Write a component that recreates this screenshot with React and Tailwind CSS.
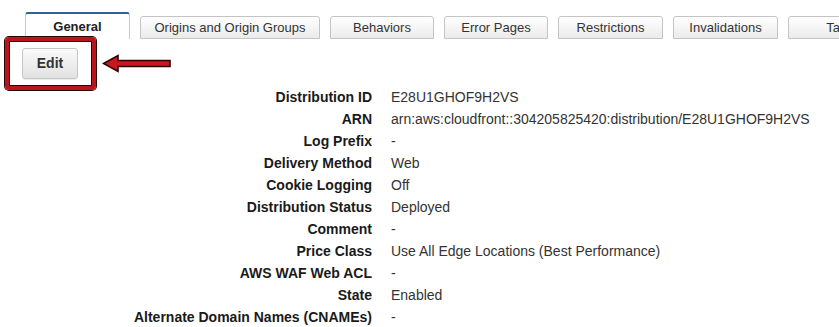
import React from "react";

const tabs = [
  { label: "Origins and Origin Groups", w: "w-[180px]" },
  { label: "Behaviors", w: "w-[104px]" },
  { label: "Error Pages", w: "w-[104px]" },
  { label: "Restrictions", w: "w-[105px]" },
  { label: "Invalidations", w: "w-[105px]" },
  { label: "Tags", w: "w-[104px]" },
];

const rows = [
  ["Distribution ID", "E28U1GHOF9H2VS"],
  ["ARN", "arn:aws:cloudfront::304205825420:distribution/E28U1GHOF9H2VS"],
  ["Log Prefix", "-"],
  ["Delivery Method", "Web"],
  ["Cookie Logging", "Off"],
  ["Distribution Status", "Deployed"],
  ["Comment", "-"],
  ["Price Class", "Use All Edge Locations (Best Performance)"],
  ["AWS WAF Web ACL", "-"],
  ["State", "Enabled"],
  ["Alternate Domain Names (CNAMEs)", "-"],
];

export default function App() {
  return (
    <div
      className="relative w-[839px] h-[327px] overflow-hidden bg-white text-[#333]"
      style={{ fontFamily: '"Liberation Sans", Arial, sans-serif' }}
    >
      {/* Tabs */}
      <div className="flex items-end gap-[10px] pl-[25px] pt-[12px] whitespace-nowrap">
        <div className="w-[105px] h-[27px] shrink-0 border-t-[2px] border-x border-t-[#2f6296] border-x-[#c8c8c8] rounded-t-[3px] bg-white flex items-center justify-center pt-[1px] text-[13px] font-bold text-[#222]">
          General
        </div>
        {tabs.map((t) => (
          <div
            key={t.label}
            className={`${t.w} h-[23px] shrink-0 border border-[#c4c4c4] rounded-t-[3px] bg-gradient-to-b from-white to-[#ebebeb] flex items-center justify-center pt-[1px] text-[13px] text-[#333]`}
          >
            {t.label}
          </div>
        ))}
      </div>

      {/* Edit button */}
      <div className="pl-[22px] pt-[9px]">
        <button className="w-[56px] h-[31px] rounded-[3px] border border-[#c6c6c6] bg-gradient-to-b from-[#fafafa] to-[#e2e2e2] text-[14px] font-bold text-[#333] flex items-center justify-center shadow-[0_1px_1px_rgba(0,0,0,0.08)]">
          Edit
        </button>
      </div>

      {/* Details */}
      <div className="grid grid-cols-[372px_1fr] gap-x-[19px] pt-[7px] text-[14px] leading-[22px]">
        {rows.map(([k, v]) => (
          <React.Fragment key={k}>
            <div className="text-right font-bold text-[#1a1a1a] whitespace-nowrap">{k}</div>
            <div className="text-[#333] whitespace-nowrap">{v}</div>
          </React.Fragment>
        ))}
      </div>

      {/* Annotation: red box */}
      <div className="absolute left-[5px] top-[37px] w-[91px] h-[53px] rounded-[4px] border-[4px] border-[#b8151d] shadow-[0_0_0_1px_#2a0606,inset_0_0_0_1px_#2a0606]" />

      {/* Annotation: arrow */}
      <svg
        className="absolute left-[102px] top-[54px]"
        width="70"
        height="19"
        viewBox="0 0 70 19"
      >
        <polygon
          points="1.5,9.5 16,1.5 16,6.5 68,6.5 68,12.5 16,12.5 16,17.5"
          fill="#c9161f"
          stroke="#2a0404"
          strokeWidth="1.6"
          strokeLinejoin="miter"
        />
      </svg>
    </div>
  );
}
